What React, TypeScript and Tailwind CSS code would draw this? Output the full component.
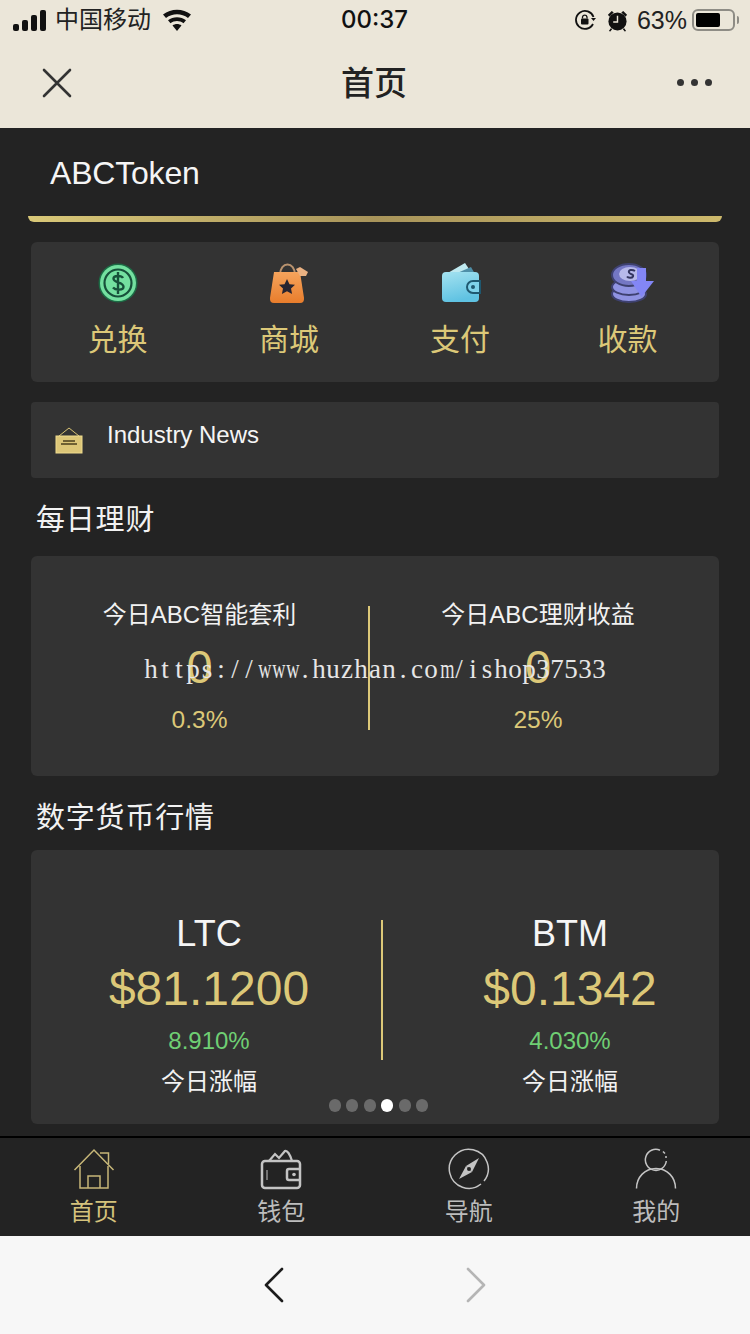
import React from 'react';

const sans = "font-['Liberation_Sans','Noto_Sans_CJK_SC',sans-serif]";
const watermark = 'https://www.huzhan.com/ishop37533';

const CoinIcon = () => (
  <svg width="40" height="40" viewBox="0 0 40 40">
    <circle cx="20" cy="20" r="19.500" fill="#1c6b45" />
    <circle cx="20" cy="20" r="18" fill="#74e0a0" />
    <circle cx="20" cy="20" r="13.500" fill="none" stroke="#17503a" strokeWidth="2.200" />
    <path d="M25 15c-1.500-2.500-9.500-3-9.500.800 0 4.200 10 2.800 10 8 0 3.700-8 3.700-10.500.700M20 9v22" fill="none" stroke="#17503a" strokeWidth="2.400" />
  </svg>
);

const BagIcon = () => (
  <svg width="40" height="42" viewBox="0 0 40 42">
    <defs>
      <linearGradient id="bag" x1="0" y1="0" x2="0" y2="1">
        <stop offset="0" stopColor="#f6a45c" />
        <stop offset="1" stopColor="#e87d2c" />
      </linearGradient>
    </defs>
    <path d="M11 13c0-14 15-14 15 0" fill="none" stroke="#b8926e" strokeWidth="2" />
    <path d="M5 10h26l4 26c.300 3-1 5-4 5H5c-3 0-4.300-2-4-5z" fill="url(#bag)" />
    <path d="M27 7l4-2 8 5-2 4-6 0z" fill="#eab283" />
    <path d="M18 17l2.500 5.200 5.500.600-4 3.800 1.100 5.400-5.100-2.700-5.100 2.700 1.100-5.400-4-3.800 5.500-.600z" fill="#262430" />
  </svg>
);

const WalletIcon = () => (
  <svg width="40" height="40" viewBox="0 0 40 40" className="ml-[2px]">
    <defs>
      <linearGradient id="wallet" x1="0" y1="0" x2="0.300" y2="1">
        <stop offset="0" stopColor="#a4e2f0" />
        <stop offset="1" stopColor="#5fc2e2" />
      </linearGradient>
    </defs>
    <path d="M5 11L24 0l6 9z" fill="#bfe9f0" />
    <path d="M14 11l16-7 4 7z" fill="#4f8fa8" />
    <rect x="1" y="9" width="37" height="30" rx="4" fill="url(#wallet)" />
    <path d="M32 18h7v12h-7a6 6 0 0 1 0-12z" fill="#7fd2ea" stroke="#1f5870" strokeWidth="2" />
    <circle cx="32" cy="24" r="2" fill="#1f5870" />
  </svg>
);

const ReceiveIcon = () => (
  <svg width="44" height="40" viewBox="0 0 44 40" className="ml-[8px]">
    <ellipse cx="19" cy="31" rx="17" ry="8" fill="#8f93e2" stroke="#3e4170" strokeWidth="2" />
    <ellipse cx="19" cy="24" rx="17" ry="8" fill="#8f93e2" stroke="#3e4170" strokeWidth="2" />
    <ellipse cx="19" cy="12" rx="17" ry="11" fill="#7477c4" stroke="#3e4170" strokeWidth="2" />
    <ellipse cx="20" cy="11" rx="11" ry="7" fill="#b7b9ea" />
    <path d="M25 8c-3-2-7-1-6 1.500s5 1 4 4c-1 2-5 1.500-6 0" fill="none" stroke="#33355f" strokeWidth="2" />
    <path d="M27 5h9v13h8L31.500 34 21 18h6z" fill="#8386f5" />
  </svg>
);

const SignIcon = () => (
  <svg width="30" height="30" viewBox="0 0 30 30">
    <path d="M5 11L15 3l10 8" fill="none" stroke="#d9c474" strokeWidth="1" />
    <rect x="2" y="11" width="26" height="17" fill="#dcc678" stroke="#f0dc8e" strokeWidth="1" />
    <path d="M9 16h12M7 19h16" stroke="#4a3f1c" strokeWidth="1.500" />
  </svg>
);

const HomeIcon = () => (
  <svg width="42" height="42" viewBox="0 0 42 42" fill="none" stroke="#c7b778" strokeWidth="1.500">
    <path d="M1.500 22L21 2l19.500 20" />
    <path d="M27 5h8.500v11M7 18v22h28V18" />
    <path d="M15 40V28h12v12" />
  </svg>
);

const TabWalletIcon = () => (
  <svg width="42" height="42" viewBox="0 0 42 42" fill="none" stroke="#c4c4c4">
    <path d="M9 13l6-7 4 4 6-7c2-1 5 3 7 10" strokeWidth="2.200" />
    <rect x="2" y="13" width="38" height="27" rx="3" strokeWidth="2.500" />
    <path d="M39 21H29a2 2 0 0 0-2 2v7a2 2 0 0 0 2 2h10" strokeWidth="2.500" />
    <circle cx="34" cy="26.500" r="1.800" fill="#c4c4c4" stroke="none" />
    <path d="M7 22v10" strokeWidth="1" />
  </svg>
);

const CompassIcon = () => (
  <svg width="42" height="42" viewBox="0 0 42 42" fill="none">
    <path d="M33 36A19.500 19.500 0 1 1 36 33" stroke="#c4c4c4" strokeWidth="1.500" />
    <path d="M31 10l-7 14-6-6z" fill="#c4c4c4" />
    <path d="M11 31l7-13 6 6z" fill="#c4c4c4" />
    <circle cx="21" cy="21" r="2" fill="#232323" />
  </svg>
);

const UserIcon = () => (
  <svg width="42" height="42" viewBox="0 0 42 42" fill="none" stroke="#c4c4c4" strokeWidth="1.500">
    <path d="M25 2.200A10.500 10.500 0 1 0 31.300 13" />
    <path d="M28 3.500l2 2M31 8v2" />
    <path d="M1.500 40.500c0-11 8-20 19.500-20s19.500 9 19.500 20" />
  </svg>
);

const shortcuts = [
  { label: '兑换', icon: <CoinIcon />, w: 'w-[173px]' },
  { label: '商城', icon: <BagIcon />, w: 'w-[170px]' },
  { label: '支付', icon: <WalletIcon />, w: 'w-[172px]' },
  { label: '收款', icon: <ReceiveIcon />, w: 'w-[163px]' },
];

const tabs = [
  { label: '首页', icon: <HomeIcon />, color: 'text-[#d4c27c]' },
  { label: '钱包', icon: <TabWalletIcon />, color: 'text-[#bdbdbd]' },
  { label: '导航', icon: <CompassIcon />, color: 'text-[#bdbdbd]' },
  { label: '我的', icon: <UserIcon />, color: 'text-[#bdbdbd]' },
];

const Earning = ({ title, rate, width }: { title: string; rate: string; width: string }) => (
  <div className={`${width} flex flex-col items-center`}>
    <div className="h-[30px] text-[24px] leading-[30px] text-[#f2f2f2]">{title}</div>
    <div className="mt-[15px] h-[44px] text-[47px] leading-[44px] text-[#dcc878]">0</div>
    <div className="mt-[17px] text-[24.500px] leading-[28px] text-[#dcc878]">{rate}</div>
  </div>
);

const Market = ({ name, price, pct }: { name: string; price: string; pct: string }) => (
  <div className="flex flex-col items-center">
    <div className="text-[36px] leading-[40px] text-[#f5f5f5]">{name}</div>
    <div className="mt-[7px] text-[48px] leading-[56px] text-[#dcc878]">{price}</div>
    <div className="mt-[9px] text-[24px] leading-[30px] text-[#6fcf73]">{pct}</div>
    <div className="mt-[10px] text-[24px] leading-[32px] text-[#f2f2f2]">今日涨幅</div>
  </div>
);

export default function App() {
  return (
    <div className={`relative w-[750px] h-[1334px] overflow-hidden flex flex-col bg-[#232323] ${sans}`}>
      {/* wechat header */}
      <header className="h-[128px] bg-[#ebe6d9] text-[#111] shrink-0">
        <div className="h-[40px] relative flex items-center justify-between pl-[13px] pr-[11px]">
          <div className="flex items-center">
            <div className="flex items-end gap-[3px] h-[21px]">
              <div className="w-[6px] h-[7px] bg-[#111] rounded-[2px]" />
              <div className="w-[6px] h-[11px] bg-[#111] rounded-[2px]" />
              <div className="w-[6px] h-[16px] bg-[#111] rounded-[2px]" />
              <div className="w-[6px] h-[21px] bg-[#111] rounded-[2px]" />
            </div>
            <span className="ml-[9px] text-[24px] leading-[30px] text-[#222]">中国移动</span>
            <svg className="ml-[11px]" width="30" height="22" viewBox="0 0 30 22" fill="#111">
              <path d="M15 22l-4.500-5.500c2.500-2 6.500-2 9 0z" />
              <path d="M8.500 14.300l-2.500-3c5-4 13-4 18 0l-2.500 3c-3.800-3-9.200-3-13 0z" />
              <path d="M4 9L1 5.500c8-6.500 20-6.500 28 0L26 9C19.500 4 10.500 4 4 9z" />
            </svg>
          </div>
          <span className="absolute left-[341px] top-[5px] font-['Inter',sans-serif] text-[24px] leading-[30px] font-medium">00:37</span>
          <div className="flex items-center">
            <svg width="22" height="22" viewBox="0 0 22 22" fill="none">
              <path d="M19.500 8A9 9 0 1 0 19 15" stroke="#111" strokeWidth="1.800" />
              <path d="M17 9h5l-2.500 3z" fill="#111" />
              <rect x="7" y="9.500" width="7.500" height="6" rx="1" fill="#111" />
              <path d="M8.500 9.500V8a2.300 2.300 0 0 1 4.500 0v1.500" stroke="#111" strokeWidth="1.300" />
            </svg>
            <svg className="ml-[11px]" width="21" height="23" viewBox="0 0 22 24" fill="#111">
              <circle cx="11" cy="13" r="9.500" />
              <path d="M1 6l4-4 2 1.500-4.500 4.500zM21 6l-4-4-2 1.500 4.500 4.500zM4 20l-2 3 1.500.500 2-2.500zM18 20l2 3-1.500.500-2-2.500z" />
              <path d="M11 7v6.500H6.500" stroke="#ebe6d9" strokeWidth="1.500" fill="none" />
            </svg>
            <span className="ml-[9px] text-[25px] leading-[30px] text-[#222]">63%</span>
            <div className="ml-[5px] w-[43px] h-[22px] rounded-[6px] border-2 border-[#8e8c85] p-[2px]">
              <div className="w-[24px] h-full bg-black rounded-[2px]" />
            </div>
            <div className="ml-[2px] w-[2px] h-[8px] bg-[#8e8c85] rounded-r-[2px]" />
          </div>
        </div>
        <div className="h-[88px] relative flex items-center justify-between pl-[42px] pr-[38px]">
          <svg width="30" height="30" viewBox="0 0 30 30" stroke="#333" strokeWidth="2.600" strokeLinecap="round" className="mb-[3px]">
            <path d="M2 2l26 26M28 2L2 28" />
          </svg>
          <span className="absolute left-0 right-0 text-center text-[33px] leading-[40px] text-[#222] font-medium top-[24px] pr-[2px]">首页</span>
          <div className="flex gap-[7px] mb-[3px]">
            <div className="w-[7px] h-[7px] rounded-full bg-[#333]" />
            <div className="w-[7px] h-[7px] rounded-full bg-[#333]" />
            <div className="w-[7px] h-[7px] rounded-full bg-[#333]" />
          </div>
        </div>
      </header>

      <main className="flex-1 flex flex-col relative">
        <div className="h-[88px] pl-[50px] pt-[27px] text-[32px] leading-[36px] text-[#f5f5f5] tracking-[-0.2px]">ABCToken</div>
        <div className="mx-[28px] h-[6px] rounded-b-[12px] bg-gradient-to-r from-[#d9c878] via-[#a8945a] to-[#cdb96c]" />

        <section className="mx-[31px] mt-[20px] h-[140px] rounded-[6px] bg-[#333333] flex">
          {shortcuts.map((s) => (
            <div key={s.label} className={`${s.w} flex flex-col items-center pt-[20px]`}>
              <div className="h-[42px] flex items-center justify-center">{s.icon}</div>
              <div className="mt-[18px] text-[30px] leading-[36px] text-[#dcc878]">{s.label}</div>
            </div>
          ))}
        </section>

        <section className="mx-[31px] mt-[20px] h-[76px] rounded-[4px] bg-[#333333] flex items-center pl-[23px]">
          <SignIcon />
          <span className="ml-[23px] mb-[11px] text-[24px] leading-[30px] text-[#f5f5f5]">Industry News</span>
        </section>

        <h2 className="ml-[36px] mt-[22px] text-[29px] leading-[40px] text-[#f2f2f2] font-normal tracking-[0.8px]">每日理财</h2>

        <section className="mx-[31px] mt-[16px] h-[220px] rounded-[6px] bg-[#333333] flex pt-[44px]">
          <Earning title="今日ABC智能套利" rate="0.3%" width="w-[337px]" />
          <div className="w-[2px] h-[124px] mt-[6px] bg-[#dcc878]" />
          <Earning title="今日ABC理财收益" rate="25%" width="w-[336px]" />
        </section>

        <h2 className="ml-[36px] mt-[22px] text-[29px] leading-[40px] text-[#f2f2f2] font-normal tracking-[0.8px]">数字货币行情</h2>

        <section className="mx-[31px] mt-[12px] h-[274px] rounded-[6px] bg-[#333333] relative flex pt-[64px]">
          <div className="w-[350px] pl-[6px] flex justify-center">
            <Market name="LTC" price="$81.1200" pct="8.910%" />
          </div>
          <div className="w-[2px] h-[140px] mt-[6px] bg-[#dcc878]" />
          <div className="flex-1 pl-[38px] flex justify-center">
            <Market name="BTM" price="$0.1342" pct="4.030%" />
          </div>
          <div className="absolute left-[298px] bottom-[12px] flex gap-[5.400px]">
            {[0, 1, 2, 3, 4, 5].map((i) => (
              <div key={i} className={`w-[12px] h-[13px] rounded-full ${i === 3 ? 'bg-white' : 'bg-[#6a6a6a]'}`} />
            ))}
          </div>
        </section>

        <nav className="mt-auto h-[100px] border-t-2 border-black bg-[#232323] flex">
          {tabs.map((t) => (
            <div key={t.label} className="w-[187.500px] flex flex-col items-center pt-[10px]">
              {t.icon}
              <span className={`mt-[7px] text-[24px] leading-[30px] ${t.color}`}>{t.label}</span>
            </div>
          ))}
        </nav>
      </main>

      <footer className="h-[98px] shrink-0 bg-[#f7f7f7] flex items-center justify-center gap-[182px]">
        <svg width="20" height="36" viewBox="0 0 20 36" fill="none" stroke="#1c1c1c" strokeWidth="2.600" strokeLinecap="round" strokeLinejoin="round">
          <path d="M18 2L2 18l16 16" />
        </svg>
        <svg width="20" height="36" viewBox="0 0 20 36" fill="none" stroke="#b5b5b5" strokeWidth="2.600" strokeLinecap="round" strokeLinejoin="round">
          <path d="M2 2l16 16L2 34" />
        </svg>
      </footer>

      {/* watermark from the source site, fixed 14px cells like a half-width serif */}
      <div className="absolute left-[144px] top-[654px] flex font-['Liberation_Serif',serif] text-[27px] leading-[30px] text-[#e6e6e6] whitespace-nowrap">
        {watermark.split('').map((ch, i) => (
          <span key={i} className={`w-[14px] text-center inline-block ${ch === 'w' || ch === 'm' ? 'scale-x-[0.68]' : ''}`}>
            {ch}
          </span>
        ))}
      </div>
    </div>
  );
}
